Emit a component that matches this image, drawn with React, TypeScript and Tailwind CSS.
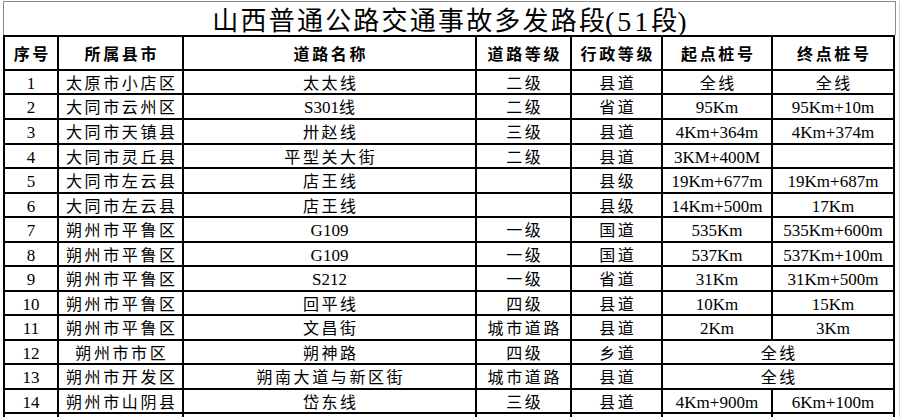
import React from 'react';

type Row = string[];

const rows: Row[] = [
  ['1', '太原市小店区', '太太线', '二级', '县道', '全线', '全线'],
  ['2', '大同市云州区', 'S301线', '二级', '省道', '95Km', '95Km+10m'],
  ['3', '大同市天镇县', '卅赵线', '三级', '县道', '4Km+364m', '4Km+374m'],
  ['4', '大同市灵丘县', '平型关大街', '二级', '县道', '3KM+400M', ''],
  ['5', '大同市左云县', '店王线', '', '县级', '19Km+677m', '19Km+687m'],
  ['6', '大同市左云县', '店王线', '', '县级', '14Km+500m', '17Km'],
  ['7', '朔州市平鲁区', 'G109', '一级', '国道', '535Km', '535Km+600m'],
  ['8', '朔州市平鲁区', 'G109', '一级', '国道', '537Km', '537Km+100m'],
  ['9', '朔州市平鲁区', 'S212', '一级', '省道', '31Km', '31Km+500m'],
  ['10', '朔州市平鲁区', '回平线', '四级', '县道', '10Km', '15Km'],
  ['11', '朔州市平鲁区', '文昌街', '城市道路', '县道', '2Km', '3Km'],
  // 12, 13: 起点/终点 合并单元格
  ['12', '朔州市市区', '朔神路', '四级', '乡道', '全线'],
  ['13', '朔州市开发区', '朔南大道与新区街', '城市道路', '县道', '全线'],
  ['14', '朔州市山阴县', '岱东线', '三级', '县道', '4Km+900m', '6Km+100m'],
  ['', '', '', '', '', '', ''],
];

const headers = ['序号', '所属县市', '道路名称', '道路等级', '行政等级', '起点桩号', '终点桩号'];

const CJK = /([\u4e00-\u9fff]+)/;

// 中文和数字字母分开排，中文加字距
function Txt({ s }: { s: string }) {
  const parts = s.split(CJK);
  return (
    <>
      {parts.map((p, i) =>
        !p ? null : CJK.test(p) ? (
          <span key={i} className="text-[16px] tracking-[2.6px] -mr-[2.6px]">
            {p}
          </span>
        ) : (
          <span key={i} className="text-[17px]">
            {p}
          </span>
        )
      )}
    </>
  );
}

function Cell({ s, span }: { s: string; span?: boolean }) {
  return (
    <div
      className={`bg-white flex items-center justify-center pt-[3px] whitespace-nowrap leading-[20px] text-black ${
        span ? 'col-span-2' : ''
      }`}
    >
      <Txt s={s} />
    </div>
  );
}

export default function App() {
  return (
    <div className="w-[900px] h-[417px] overflow-hidden bg-white pt-[1px] font-['Liberation_Serif','Noto_Sans_CJK_SC',serif] text-black">
      <div className="flex">
        <div className="w-[3px] shrink-0" />
        <div className="w-[893px] shrink-0">
          {/* 标题 */}
          <div className="h-[34px] border-t border-l border-r border-[#8a8a8a] flex items-center justify-center pt-[6px] whitespace-nowrap leading-[28px]">
            <span className="text-[26px] tracking-[2.2px] -mr-[2.2px]">山西普通公路交通事故多发路段</span>
            <span className="text-[28px] tracking-[3px]">(51</span>
            <span className="text-[26px]">段</span>
            <span className="text-[28px]">)</span>
          </div>

          {/* 表格 */}
          <div className="w-[892px] bg-black p-[2px] pb-0 grid gap-[2px] grid-cols-[52px_123px_291px_93px_89px_108px_120px] grid-rows-[32px_22px_23px_23px_22px_23px_22px_23px_22px_23px_22px_23px_22px_23px_22px_22px]">
            {headers.map((h) => (
              <div
                key={h}
                className="bg-white flex items-center justify-center pt-[4px] whitespace-nowrap leading-[20px] font-bold"
              >
                <span className="text-[16px] tracking-[2.6px] -mr-[2.6px]">{h}</span>
              </div>
            ))}
            {rows.map((r, i) =>
              r.length === 6 ? (
                <React.Fragment key={i}>
                  {r.slice(0, 5).map((c, j) => (
                    <Cell key={j} s={c} />
                  ))}
                  <Cell s={r[5]} span />
                </React.Fragment>
              ) : (
                <React.Fragment key={i}>
                  {r.map((c, j) => (
                    <Cell key={j} s={c} />
                  ))}
                </React.Fragment>
              )
            )}
          </div>
        </div>
        <div className="flex-1 h-[417px] border-r border-[#d4d4d4]" />
      </div>
    </div>
  );
}
